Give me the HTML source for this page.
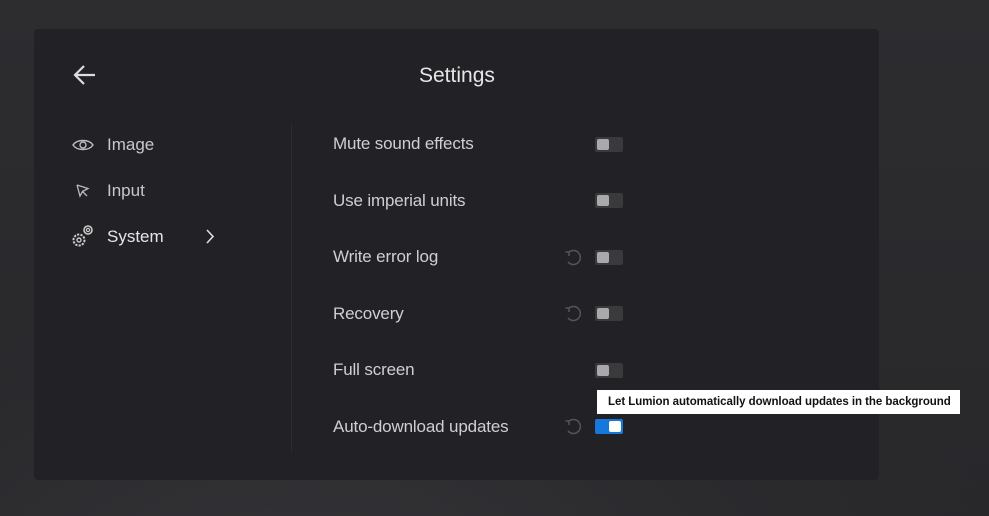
<!DOCTYPE html>
<html><head><style>
body{margin:0;width:989px;height:516px;overflow:hidden;background:#2a2a2d;font-family:"Liberation Sans",sans-serif;position:relative}
.bg{position:absolute;inset:0;background:radial-gradient(ellipse 700px 300px at 300px 560px,#333337 0%,#2b2b2e 60%,transparent 100%),linear-gradient(180deg,#2d2d30,#28282b)}
.panel{position:absolute;left:34px;top:29px;width:845px;height:451px;background:#222226;border-radius:4px}
.t{position:absolute;color:#d2d2d4;white-space:nowrap}
.title{left:419px;top:64px;font-size:21px;color:#e6e6e6}
.nav{font-size:17px;left:107px;color:#c8c8ca}
.lbl{left:333px;font-size:17px;color:#cfcfd1;letter-spacing:-0.15px}
.tg{position:absolute;left:595px;width:28px;height:15px;background:#3a3a3d;border-radius:2px}
.tg i{position:absolute;left:2px;top:2px;width:12px;height:11px;background:#a9a9ab;border-radius:2px}
.tg.on{background:#1778db}
.tg.on i{left:14px;background:#fff}
.div{position:absolute;left:291px;top:124px;width:1px;height:328px;background:#2d2d31}
.tip{position:absolute;left:597px;top:390px;width:363px;height:24px;background:#fff;color:#111;font-size:11.5px;font-weight:bold;line-height:25px;padding-left:11px;box-sizing:border-box;white-space:nowrap;letter-spacing:-0.05px}
svg{position:absolute}
</style></head><body>
<div class="bg"></div>
<div class="panel"></div>
<svg style="left:72px;top:64px" width="26" height="22" viewBox="0 0 26 22"><path d="M23 11H3M12 2L3 11l9 9" fill="none" stroke="#ddd" stroke-width="2.2"/></svg>
<div class="t title">Settings</div>
<svg style="left:72px;top:137px" width="22" height="16" viewBox="0 0 22 16"><path d="M1 8C5 2 17 2 21 8C17 14 5 14 1 8Z" fill="none" stroke="#bbb" stroke-width="1.4"/><circle cx="11" cy="8" r="3" fill="none" stroke="#bbb" stroke-width="1.4"/></svg>
<div class="t nav" style="top:135px">Image</div>
<svg style="left:75px;top:183px" width="16" height="16" viewBox="0 0 16 16"><path d="M2 2L5 13L7.5 8.5L12 13M2 2L13 5.5L7.5 8.5" fill="none" stroke="#bbb" stroke-width="1.3"/></svg>
<div class="t nav" style="top:181px">Input</div>
<svg style="left:71px;top:224px" width="24" height="24" viewBox="0 0 24 24"><circle cx="8" cy="16" r="5.5" fill="none" stroke="#ccc" stroke-width="2" stroke-dasharray="2.2 1.2"/><circle cx="8" cy="16" r="2" fill="none" stroke="#ccc" stroke-width="1.4"/><circle cx="17" cy="6" r="4" fill="none" stroke="#ccc" stroke-width="1.6"/><circle cx="17" cy="6" r="1.6" fill="none" stroke="#ccc" stroke-width="1.2"/></svg>
<div class="t nav" style="top:227px;color:#e6e6e8">System</div>
<svg style="left:204px;top:228px" width="12" height="17" viewBox="0 0 12 17"><path d="M3 2l6 6.5L3 15" fill="none" stroke="#ddd" stroke-width="1.6"/></svg>
<div class="div"></div>
<div class="t lbl" style="top:134px">Mute sound effects</div>
<div class="t lbl" style="top:191px">Use imperial units</div>
<div class="t lbl" style="top:247px">Write error log</div>
<div class="t lbl" style="top:304px">Recovery</div>
<div class="t lbl" style="top:360px">Full screen</div>
<div class="t lbl" style="top:417px">Auto-download updates</div>
<div class="tg" style="top:137px"><i></i></div>
<div class="tg" style="top:193px"><i></i></div>
<div class="tg" style="top:250px"><i></i></div>
<div class="tg" style="top:306px"><i></i></div>
<div class="tg" style="top:363px"><i></i></div>
<div class="tg on" style="top:419px"><i></i></div>
<svg style="left:564px;top:248px" width="20" height="20" viewBox="0 0 20 20"><path d="M5 4A7 7 0 1 1 4 14M5 4v4M5 4H1.5" fill="none" stroke="#555558" stroke-width="1.5"/></svg>
<svg style="left:564px;top:304px" width="20" height="20" viewBox="0 0 20 20"><path d="M5 4A7 7 0 1 1 4 14M5 4v4M5 4H1.5" fill="none" stroke="#555558" stroke-width="1.5"/></svg>
<svg style="left:564px;top:417px" width="20" height="20" viewBox="0 0 20 20"><path d="M5 4A7 7 0 1 1 4 14M5 4v4M5 4H1.5" fill="none" stroke="#555558" stroke-width="1.5"/></svg>
<div class="tip">Let Lumion automatically download updates in the background</div>
</body></html>
